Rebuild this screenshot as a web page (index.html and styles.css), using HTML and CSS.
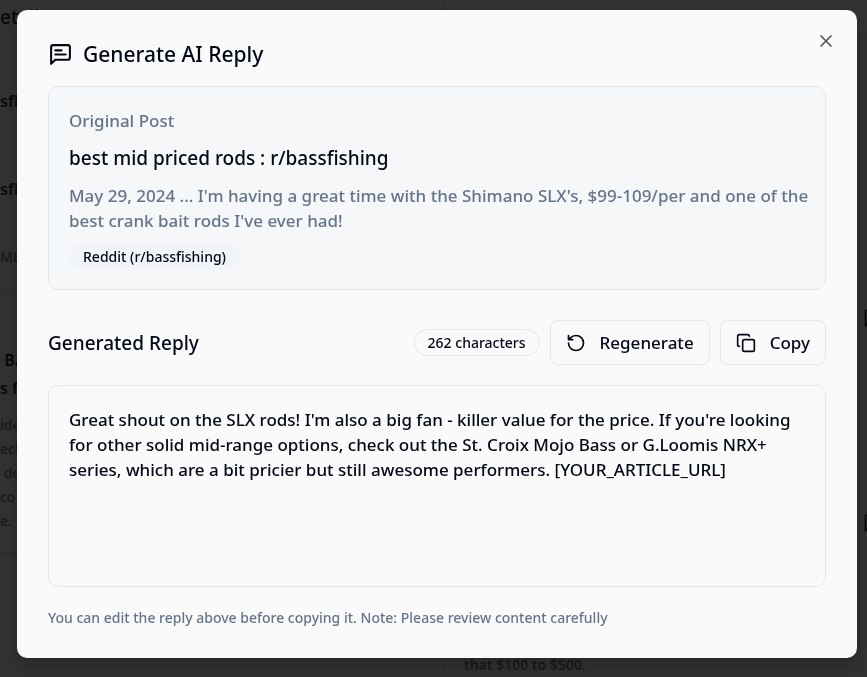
FILE: index.html
```html
<!DOCTYPE html>
<html lang="en">
<head>
    <meta charset="UTF-8">
    <meta name="viewport" content="width=device-width, initial-scale=1.0">
    <title>Generate AI Reply</title>
    <link rel="stylesheet" href="styles.css">
</head>
<body>
    <div class="page" aria-hidden="true">
        <div class="details">
            <p class="page-title">etails</p>
            <p class="keyword">sfi</p>
            <p class="keyword">sfi</p>
            <p class="column-name">MEI</p>
            <div class="post">
                <p class="post-title">&nbsp;Ba<br>s f</p>
                <p class="post-text">ide<br>ech<br>&nbsp;de<br>co<br>e.</p>
            </div>
        </div>
        <div class="snippet">that $100 to $500.</div>
        <div class="marks">
            <svg class="mark" viewBox="0 0 24 24"><path d="M21 15a2 2 0 0 1-2 2H7l-4 4V3h18z"/></svg>
            <svg class="mark" viewBox="0 0 24 24"><path d="M21 15a2 2 0 0 1-2 2H7l-4 4V3h18z"/></svg>
        </div>
    </div>

    <div class="overlay">
        <div class="dialog" role="dialog" aria-labelledby="dialog-title">
            <button class="close" aria-label="Close">
                <svg class="icon" viewBox="0 0 24 24"><path d="M18 6 6 18M6 6l12 12"/></svg>
            </button>
            <h2 class="dialog-title" id="dialog-title">
                <svg class="icon title-icon" viewBox="0 0 24 24"><path d="M21 15a2 2 0 0 1-2 2H7l-4 4V5a2 2 0 0 1 2-2h14a2 2 0 0 1 2 2zM13 8H7M17 12H7"/></svg>
                Generate AI Reply
            </h2>

            <div class="original">
                <div class="original-label">Original Post</div>
                <h3>best mid priced rods : r/bassfishing</h3>
                <p>May 29, 2024 ... I'm having a great time with the Shimano SLX's, $99-109/per and one of the best crank bait rods I've ever had!</p>
                <span class="badge badge-filled">Reddit (r/bassfishing)</span>
            </div>

            <div class="reply-header">
                <label for="reply">Generated Reply</label>
                <div class="actions">
                    <span class="badge">262 characters</span>
                    <button class="btn">
                        <svg class="icon" viewBox="0 0 24 24"><path d="M3 12a9 9 0 1 0 9-9 9.750 9.750 0 0 0-6.740 2.740L3 8M3 3v5h5"/></svg>
                        Regenerate
                    </button>
                    <button class="btn">
                        <svg class="icon" viewBox="0 0 24 24"><rect width="14" height="14" x="8" y="8" rx="2"/><path d="M4 16c-1.100 0-2-.9-2-2V4c0-1.100.9-2 2-2h10c1.100 0 2 .9 2 2"/></svg>
                        Copy
                    </button>
                </div>
            </div>

            <textarea id="reply">Great shout on the SLX rods! I'm also a big fan - killer value for the price. If you're looking for other solid mid-range options, check out the St. Croix Mojo Bass or G.Loomis NRX+ series, which are a bit pricier but still awesome performers. [YOUR_ARTICLE_URL]</textarea>
            <p class="note">You can edit the reply above before copying it. Note: Please review content carefully</p>
        </div>
    </div>
</body>
</html>
```

FILE: styles.css
```css
* {
    box-sizing: border-box;
}
body {
    margin: 0;
    background: #323232;
    color: #020817;
    font-family: "Noto Sans", "Open Sans", sans-serif;
    font-weight: 500;
    overflow: hidden;
}
h2, h3, p {
    margin: 0;
    font-weight: 500;
}
button, textarea {
    font: inherit;
    color: inherit;
}
.icon {
    width: 20px;
    height: 20px;
    flex-shrink: 0;
    fill: none;
    stroke: currentColor;
    stroke-width: 2;
    stroke-linecap: round;
    stroke-linejoin: round;
}

/* page behind the dialog */
.page {
    display: flex;
    height: 100vh;
    color: #08090d;
    overflow: hidden;
}
.details {
    width: 445px;
    flex-shrink: 0;
    border-right: 1px solid #2e2e2e;
}
.page-title {
    padding-top: 3px;
    font-size: 19px;
    line-height: 28px;
}
.keyword {
    margin-top: 52px;
    font-size: 16px;
    font-weight: 600;
    line-height: 36px;
}
.column-name {
    padding: 36px 0 20px;
    border-bottom: 1px solid #2b2b2b;
    color: #17191d;
    font-size: 14px;
    line-height: 28px;
}
.post {
    padding: 54px 0 20px;
    border-bottom: 1px solid #2b2b2b;
}
.post-title {
    font-size: 16px;
    font-weight: 600;
    line-height: 28px;
}
.post-text {
    margin-top: 11px;
    color: #17191d;
    font-size: 14px;
    line-height: 24px;
}
.snippet {
    flex: 1;
    align-self: flex-end;
    padding-left: 19px;
    color: #17191d;
    font-size: 14px;
    font-weight: 600;
    line-height: 24px;
}
.marks {
    display: flex;
    flex-direction: column;
    gap: 185px;
    margin-right: -16px;
    padding-top: 308px;
}
.mark {
    width: 20px;
    height: 20px;
    fill: none;
    stroke: #08090d;
    stroke-width: 2;
}

.overlay {
    position: fixed;
    inset: 0;
    padding: 10px 10px 19px 17px;
}
.dialog {
    position: relative;
    padding: 28px 31px;
    background: #fafafa;
    border-radius: 10px;
    box-shadow: 0 8px 16px rgba(0, 0, 0, 0.2);
}
.close {
    position: absolute;
    top: 21px;
    right: 21px;
    display: flex;
    padding: 0;
    border: 0;
    background: none;
    color: #4d515b;
}
.dialog-title {
    display: flex;
    align-items: center;
    gap: 10px;
    font-size: 21px;
    line-height: 32px;
}
.title-icon {
    width: 25px;
    height: 25px;
}

.original {
    margin-top: 16px;
    padding: 20px 10px 19px 20px;
    border: 1px solid #e2e8f0;
    border-radius: 10px;
    background: #f5f7f9;
    color: #64748b;
    font-size: 17px;
    line-height: 25px;
}
.original-label {
    line-height: 27px;
}
.original h3 {
    margin: 10px 0 11px;
    color: #020817;
    font-size: 19px;
    line-height: 28px;
}
.badge {
    display: inline-block;
    padding: 0 13px;
    border: 1px solid #e2e8f0;
    border-radius: 14px;
    color: #020817;
    font-size: 14px;
    line-height: 25px;
}
.badge-filled {
    margin-top: 10px;
    border-color: #f1f5f9;
    background: #f1f5f9;
}

.reply-header {
    display: flex;
    align-items: center;
    justify-content: space-between;
    margin: 30px 0 20px;
    font-size: 19px;
}
.actions {
    display: flex;
    align-items: center;
    gap: 10px;
}
.btn {
    display: flex;
    align-items: center;
    gap: 14px;
    height: 45px;
    padding: 0 15px;
    border: 1px solid #e2e8f0;
    border-radius: 8px;
    background: #fafafa;
    font-size: 17px;
}

textarea {
    display: block;
    width: 100%;
    height: 202px;
    padding: 21px 20px;
    border: 1px solid #e2e8f0;
    border-radius: 10px;
    background: #fafafa;
    font-size: 17px;
    line-height: 25px;
    resize: none;
}
.note {
    margin-top: 19px;
    color: #64748b;
    font-size: 14px;
    line-height: 24px;
}
```
